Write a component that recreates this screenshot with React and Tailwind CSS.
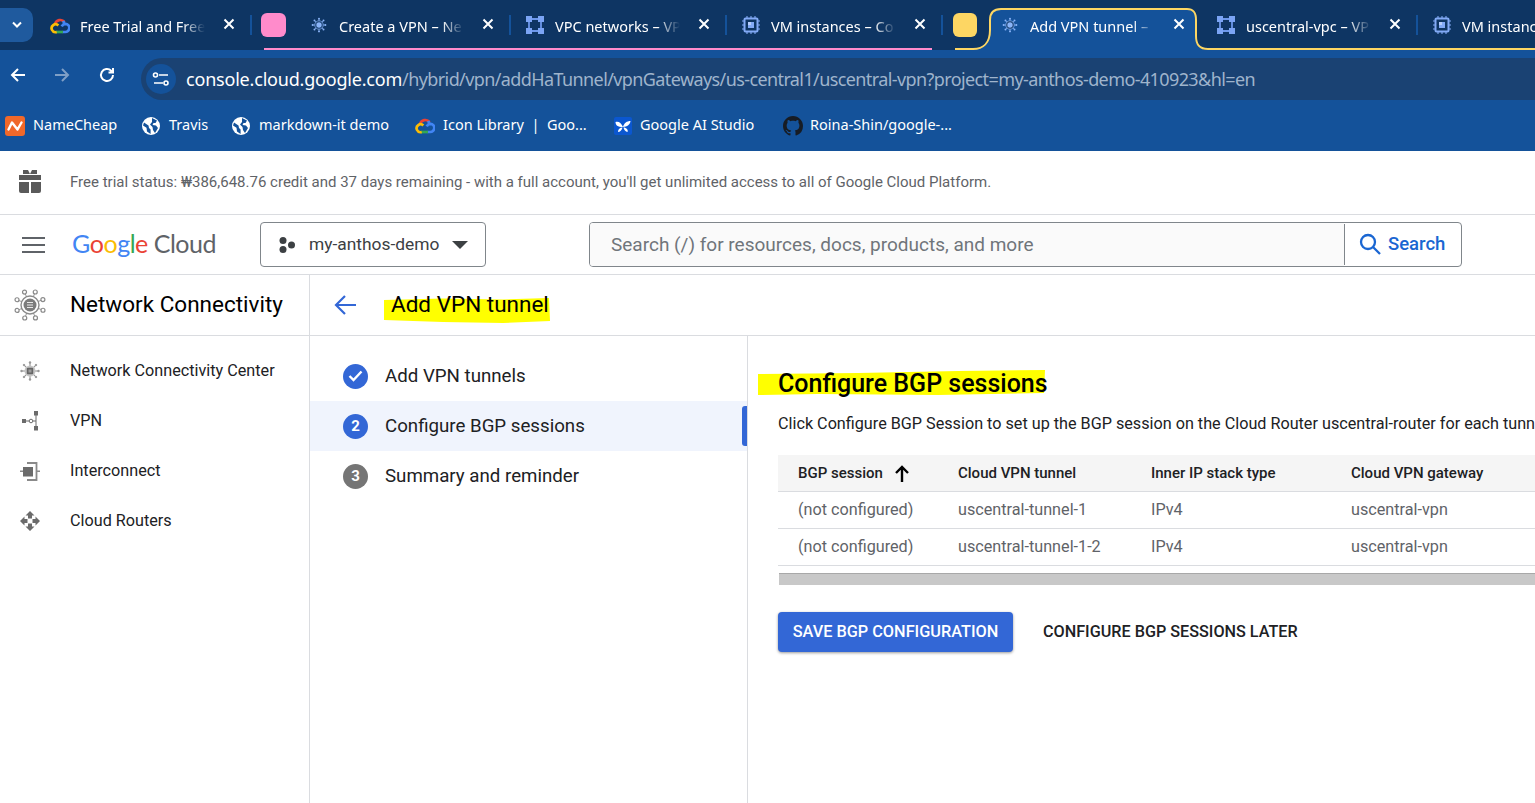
import React from "react";

const Hub = ({ size = 18, color = "#8ab4f8", spoke = 8.5, dot = 1.2, core = 3.6 }) => {
  const angles = [0, 45, 90, 135, 180, 225, 270, 315];
  return (
    <svg width={size} height={size} viewBox="0 0 24 24" className="shrink-0">
      {angles.map((a) => {
        const x = 12 + spoke * Math.cos((a * Math.PI) / 180);
        const y = 12 + spoke * Math.sin((a * Math.PI) / 180);
        return (
          <g key={a}>
            <line x1="12" y1="12" x2={x} y2={y} stroke={color} strokeWidth="1" />
            <circle cx={x} cy={y} r={dot} fill={color} />
          </g>
        );
      })}
      <circle cx="12" cy="12" r={core + 2} fill="#0e3563" stroke={color} strokeWidth="1" />
      <circle cx="12" cy="12" r={core} fill={color} />
    </svg>
  );
};

// big network connectivity mark in the section bar
const NetworkMark = () => {
  const angles = [0, 45, 90, 135, 180, 225, 270, 315];
  return (
    <svg width="34" height="34" viewBox="0 0 34 34" className="shrink-0">
      {angles.map((a) => {
        const x = 17 + 14 * Math.cos(((a + 22) * Math.PI) / 180);
        const y = 17 + 14 * Math.sin(((a + 22) * Math.PI) / 180);
        return (
          <g key={a}>
            <line x1="17" y1="17" x2={x} y2={y} stroke="#9a9a9a" strokeWidth="1" />
            <circle cx={x} cy={y} r="2" fill="#fff" stroke="#8a8a8a" strokeWidth="1.200" />
          </g>
        );
      })}
      <circle cx="17" cy="17" r="9" fill="#fff" stroke="#8a8a8a" strokeWidth="1.400" />
      <circle cx="17" cy="17" r="6.500" fill="#7c7c7c" />
      <path d="M14 14.500h6M14 17h6M14 19.500h6" stroke="#e8e8e8" strokeWidth="1.100" />
    </svg>
  );
};

const VpcIcon = () => (
  <svg width="18" height="18" viewBox="0 0 18 18" className="shrink-0">
    <path d="M3 3H15V15H3Z" fill="none" stroke="#6d97ea" strokeWidth="1.800" />
    <path d="M0 0h6v6H0zM12 0h6v6h-6zM0 12h6v6H0zM12 12h6v6h-6z" fill="#7ba4f4" />
  </svg>
);

const ChipIcon = () => (
  <svg width="18" height="18" viewBox="0 0 18 18" className="shrink-0">
    <path d="M5 0v18M9 0v18M13 0v18M0 5h18M0 9h18M0 13h18" stroke="#82aaf6" strokeWidth="1.100" />
    <rect x="2.500" y="2.500" width="13" height="13" rx="1" fill="#0e3563" stroke="#82aaf6" strokeWidth="2" />
    <rect x="6" y="6" width="6" height="6" fill="#82aaf6" />
    <path d="M6 6h3v3H6z" fill="#b5ccfa" />
  </svg>
);

const CloudLogo = ({ w = 20, h = 17 }) => (
  <svg width={w} height={h} viewBox="0 0 24 20" fill="none" strokeWidth="3.200" className="shrink-0">
    <path d="M6 8.500A6.500 6.500 0 0 1 17.500 6" stroke="#ea4335" />
    <path d="M15 6.500l3-1M14 11a5.500 5.500 0 0 1 4.500-3A4.700 4.700 0 0 1 18 17.800H15" stroke="#4285f4" />
    <path d="M15.500 17.800H7" stroke="#34a853" />
    <path d="M8 17.800A4.700 4.700 0 1 1 10 10" stroke="#fbbc05" />
  </svg>
);

const Globe = () => (
  <svg width="18" height="18" viewBox="0 0 18 18" className="shrink-0">
    <circle cx="9" cy="9" r="9" fill="#fff" />
    <path d="M2 5.500 6.500 8.500 7 11l1.600 1.400V17L5 14.500 4.500 10.800 1 8.500ZM10 1l5 2.500-1.500 2.500H11.500L10.500 8l3.500.5 2 2.500-3 5L11 13l-.5-3L8 7.500 10 5Z" fill="#14529a" />
  </svg>
);

const NameCheapIcon = () => (
  <span className="w-[20px] h-[20px] rounded-[3px] bg-[#f0682a] flex items-center justify-center shrink-0">
    <svg width="16" height="10" viewBox="0 0 16 10" fill="none">
      <path d="M1.500 8.500 5 1.500l5.500 7 4-7" stroke="#fff" strokeWidth="2.400" strokeLinecap="round" strokeLinejoin="round" />
    </svg>
  </span>
);

const AiStudioIcon = () => (
  <span className="w-[18px] h-[18px] rounded-[2px] bg-[#0b57d0] flex items-center justify-center shrink-0">
    <svg width="16" height="14" viewBox="0 0 16 14" fill="#fff">
      <path d="M8 8C6 3 3 2 .5 3c0 3 2 5 7.500 5ZM8 8c1-4 4-6 7.500-6C15.500 5 12 8 8 8ZM7.500 8.500C5 8.500 3 10 3 13c2 0 4-2 4.500-4.500ZM8.500 8.500c.5 2.500 2 4 4 4.500 1-2-1-4.500-4-4.500Z" />
    </svg>
  </span>
);

const GithubIcon = () => (
  <svg width="20" height="20" viewBox="0 0 16 16" fill="#171c24" className="shrink-0">
    <path d="M8 0C3.580 0 0 3.580 0 8c0 3.540 2.290 6.530 5.470 7.590.4.070.55-.170.55-.380 0-.190-.010-.820-.010-1.490-2.010.370-2.530-.490-2.690-.940-.090-.230-.480-.940-.820-1.130-.280-.150-.680-.520-.010-.530.630-.010 1.080.580 1.230.820.720 1.210 1.870.870 2.330.660.070-.520.280-.870.510-1.070-1.780-.200-3.640-.890-3.640-3.950 0-.870.310-1.590.820-2.150-.080-.200-.360-1.020.080-2.120 0 0 .670-.210 2.200.820.640-.180 1.320-.270 2-.270s1.360.090 2 .270c1.530-1.040 2.200-.820 2.200-.820.440 1.100.160 1.920.080 2.120.510.560.820 1.270.820 2.150 0 3.070-1.870 3.750-3.650 3.950.290.250.540.730.540 1.480 0 1.070-.010 1.930-.010 2.200 0 .210.150.460.550.380A8.010 8.010 0 0 0 16 8c0-4.420-3.580-8-8-8Z" />
  </svg>
);

const Tab = ({ icon, title, last }) => (
  <div className="w-[216px] h-[50px] shrink-0 flex items-center pl-[15px] pt-[4px]">
    <span className="w-[18px] flex justify-center shrink-0 -mt-[4px]">{icon}</span>
    <span className="ml-[11px] w-[125px] shrink-0 whitespace-nowrap text-[14.500px] text-white [mask-image:linear-gradient(to_right,black_82%,transparent)]">
      {title}
    </span>
    <svg width="12" height="12" viewBox="0 0 12 12" className="ml-[18px] -mt-[6px] shrink-0">
      <path d="M1.500 1.500l9 9M10.500 1.500l-9 9" stroke="#fff" strokeWidth="2" />
    </svg>
    {!last && <span className="ml-auto w-[2px] h-[20px] -mt-[4px] bg-[#14529a] shrink-0" />}
  </div>
);

const tabFont = "font-['Noto_Sans',sans-serif]";

const TabStrip = () => (
  <div className={`${tabFont} h-[50px] bg-[#0e3563] flex overflow-hidden relative`}>
    <div className="w-[36px] shrink-0 pt-[8px]">
      <div className="w-[33px] h-[34px] rounded-r-[10px] bg-[#1f5a9e] flex items-center justify-center">
        <svg width="12" height="8" viewBox="0 0 12 8" fill="none">
          <path d="M2 1.500 6 5.500 10 1.500" stroke="#fff" strokeWidth="2" />
        </svg>
      </div>
    </div>
    <Tab icon={<CloudLogo />} title="Free Trial and Free" />
    <div className="w-[43px] shrink-0 pl-[9px] pt-[13px]">
      <div className="w-[25px] h-[24px] rounded-[6px] bg-[#ff8bcb]" />
    </div>
    <div className="flex relative shrink-0">
      <Tab icon={<Hub size={18} dot={1.300} />} title="Create a VPN – Ne" />
      <Tab icon={<VpcIcon />} title="VPC networks – VP" />
      <Tab icon={<ChipIcon />} title="VM instances – Co" />
      <span className="absolute left-[-31px] right-[11px] bottom-0 h-[2px] bg-[#ff8bcb]" />
    </div>
    <div className="w-[43px] shrink-0 pl-[10px] pt-[13px] relative">
      <div className="w-[24px] h-[24px] rounded-[6px] bg-[#fdd663]" />
    </div>
    <div className="relative w-[216px] shrink-0">
      <svg width="256" height="50" viewBox="0 0 256 50" className="absolute -left-[31px] top-0" fill="#14529a" stroke="none">
        <path d="M0 50H256V50H252C242 49 242 43 242 36V20C242 13 239 9 232 9H46C39 9 35 13 35 20V30C35 43 28 49 18 49H0Z" />
        <path d="M0 49H18C28 49 35 43 35 30V20C35 13 39 9 46 9H232C239 9 241 13 241 20V36C241 43 243 49 253 49H256" fill="none" stroke="#fdd663" strokeWidth="2" />
      </svg>
      <div className="relative">
        <Tab icon={<Hub size={18} dot={1.300} />} title="Add VPN tunnel –" last />
      </div>
    </div>
    <div className="flex relative shrink-0">
      <Tab icon={<VpcIcon />} title="uscentral-vpc – VP" />
      <Tab icon={<ChipIcon />} title="VM instanc" />
      <span className="absolute left-[6px] right-0 bottom-0 h-[2px] bg-[#fdd663]" />
    </div>
  </div>
);

const Toolbar = () => (
  <div className={`${tabFont} h-[50px] bg-[#14529a] flex items-end`}>
    <div className="h-[50px] w-[141px] shrink-0 flex items-center">
      <svg width="18" height="18" viewBox="0 0 18 18" fill="none" className="ml-[9px]">
        <path d="M16 9H3M9 3 3 9l6 6" stroke="#fff" strokeWidth="2" />
      </svg>
      <svg width="18" height="18" viewBox="0 0 18 18" fill="none" className="ml-[26px]">
        <path d="M2 9h13M9 3l6 6-6 6" stroke="#7f9fc6" strokeWidth="2" />
      </svg>
      <svg width="18" height="18" viewBox="0 0 18 18" fill="none" className="ml-[27px]">
        <path d="M15 9a6 6 0 1 1-1.800-4.300L15 6.500M15 2v4.500h-4.500" stroke="#fff" strokeWidth="2" />
      </svg>
    </div>
    <div className="flex-1 h-[42px] bg-[#1a4273] rounded-l-[21px] flex items-center pl-[5px]">
      <div className="w-[30px] h-[30px] rounded-full bg-[#14529a] flex items-center justify-center shrink-0">
        <svg width="18" height="14" viewBox="0 0 18 14" fill="none" stroke="#fff" strokeWidth="1.600">
          <path d="M7 3h9M2 11h9" />
          <circle cx="3.500" cy="3" r="2" />
          <circle cx="14" cy="11" r="2" />
        </svg>
      </div>
      <span className="ml-[10px] text-[18px] whitespace-nowrap text-white tracking-[-0.2px]">
        console.cloud.google.com
        <span className="text-[#9fb4cc] tracking-[-0.6px]">/hybrid/vpn/addHaTunnel/vpnGateways/us-central1/uscentral-vpn?project=my-anthos-demo-410923&amp;hl=en</span>
      </span>
    </div>
  </div>
);

const bookmarks = [
  { icon: <NameCheapIcon />, label: "NameCheap", w: "w-[142px]", pad: "pl-[5px]", gap: "gap-[8px]" },
  { icon: <Globe />, label: "Travis", w: "w-[90px]", pad: "", gap: "gap-[9px]" },
  { icon: <Globe />, label: "markdown-it demo", w: "w-[183px]", pad: "", gap: "gap-[9px]" },
  { icon: <CloudLogo w={20} h={17} />, label: "Icon Library  |  Goo...", w: "w-[199px]", pad: "", gap: "gap-[8px]" },
  { icon: <AiStudioIcon />, label: "Google AI Studio", w: "w-[169px]", pad: "", gap: "gap-[8px]" },
  { icon: <GithubIcon />, label: "Roina-Shin/google-...", w: "w-[190px]", pad: "", gap: "gap-[7px]" },
];

const Bookmarks = () => (
  <div className={`${tabFont} h-[51px] bg-[#14529a] flex items-center text-[14.500px] text-white`}>
    {bookmarks.map((b) => (
      <div key={b.label} className={`${b.w} ${b.pad} ${b.gap} flex items-center shrink-0 whitespace-pre`}>
        {b.icon}
        <span className="pb-[2px]">{b.label}</span>
      </div>
    ))}
  </div>
);

const TrialBanner = () => (
  <div className="h-[64px] border-b border-[#dadce0] flex items-center pl-[19px]">
    <svg width="22" height="23" viewBox="0 0 22 23" fill="#5a5a5a" className="shrink-0 -mt-[2px]">
      <path d="M0 5h22v5H0zM0 12h10v11H2a2 2 0 0 1-2-2zM12 12h10v9a2 2 0 0 1-2 2h-8zM10 5h2v5h-2z" />
      <path d="M4 0h5l2 4H4zM18 0h-5l-2 4h7z" />
    </svg>
    <span className="ml-[29px] text-[15px] text-[#5f6368] whitespace-nowrap">
      Free trial status: ₩386,648.76 credit and 37 days remaining - with a full account, you'll get unlimited access to all of Google Cloud Platform.
    </span>
  </div>
);

const Header = () => (
  <div className="h-[60px] border-b border-[#dadce0] flex items-center pl-[22px]">
    <svg width="23" height="16" viewBox="0 0 23 16" fill="#5f6368" className="shrink-0">
      <path d="M0 0h23v2H0zM0 7h23v2H0zM0 14h23v2H0z" />
    </svg>
    <div className="ml-[27px] w-[188px] shrink-0 pb-[2px] flex items-baseline font-['Lato',sans-serif] text-[25px] tracking-[-0.500px]">
      <span className="text-[#4285f4]">G</span>
      <span className="text-[#ea4335]">o</span>
      <span className="text-[#fbbc05]">o</span>
      <span className="text-[#4285f4]">g</span>
      <span className="text-[#34a853]">l</span>
      <span className="text-[#ea4335]">e</span>
      <span className="ml-[6px] text-[#5f6368]">Cloud</span>
    </div>
    <div className="w-[226px] h-[45px] shrink-0 border border-[#80868b] rounded-[4px] flex items-center pl-[17px]">
      <svg width="18" height="16" viewBox="0 0 18 16" fill="#3c4043" className="shrink-0">
        <circle cx="5" cy="3.500" r="3.500" />
        <circle cx="5" cy="12.500" r="3.500" />
        <circle cx="13.500" cy="8" r="3.500" />
      </svg>
      <span className="ml-[13px] pb-[1px] text-[17.400px] text-[#3c4043] whitespace-nowrap">my-anthos-demo</span>
      <svg width="16" height="8" viewBox="0 0 16 8" fill="#3c4043" className="ml-[12px] shrink-0">
        <path d="M0 0h16L8 8z" />
      </svg>
    </div>
    <div className="ml-[103px] w-[873px] h-[45px] shrink-0 border border-[#80868b] rounded-[4px] flex overflow-hidden">
      <div className="flex-1 bg-[#fafafa] flex items-center pl-[21px] pt-[2px] text-[19px] text-[#70757a] whitespace-nowrap">
        Search (/) for resources, docs, products, and more
      </div>
      <div className="w-[117px] shrink-0 border-l border-[#80868b] flex items-center pl-[14px] my-[1px]">
        <svg width="22" height="22" viewBox="0 0 22 22" fill="none" stroke="#1a66d2" strokeWidth="2.300" className="shrink-0 -mt-[2px]">
          <circle cx="9" cy="9" r="7" />
          <path d="M14 14l7 7" />
        </svg>
        <span className="ml-[7px] text-[18.500px] font-medium text-[#1a66d2]">Search</span>
      </div>
    </div>
  </div>
);

const SectionBar = () => (
  <div className="h-[61px] border-b border-[#dadce0] flex">
    <div className="w-[310px] shrink-0 border-r border-[#dadce0] flex items-center pl-[13px]">
      <NetworkMark />
      <span className="ml-[23px] text-[22.500px] text-black whitespace-nowrap">Network Connectivity</span>
    </div>
    <div className="flex-1 flex items-center pl-[24px]">
      <svg width="22" height="20" viewBox="0 0 22 20" fill="none" stroke="#3367d6" strokeWidth="2.200" className="shrink-0">
        <path d="M22 10H2M11 1 2 10l9 9" />
      </svg>
      {/* marker stroke from the screenshot, sits behind the title */}
      <span className="ml-[35px] relative whitespace-nowrap text-[22.500px] text-black">
        <svg width="168" height="25" viewBox="0 0 168 25" className="absolute left-[-8px] top-[10px]">
          <path d="M1 2 60 .5 120 1.500 166 0 167 23 120 25 60 24 30 23 1 22Z" fill="#ffff00" />
        </svg>
        <span className="relative">Add VPN tunnel</span>
      </span>
    </div>
  </div>
);

const NavIcon1 = () => (
  <svg width="20" height="20" viewBox="0 0 20 20" className="shrink-0">
    {[0, 45, 90, 135, 180, 225, 270, 315].map((a) => (
      <g key={a} transform={`rotate(${a} 10 10)`}>
        <path d="M10 1.500v4" stroke="#8a8a8a" strokeWidth="1" />
        <circle cx="10" cy="1.500" r="1.200" fill="#9a9a9a" />
      </g>
    ))}
    <circle cx="10" cy="10" r="5.500" fill="#c4c4c4" />
    <rect x="6.800" y="6.800" width="6.400" height="6.400" rx="1" fill="#666" />
    <rect x="8.500" y="8.500" width="3" height="3" fill="#9a9a9a" />
  </svg>
);
const NavIcon2 = () => (
  <svg width="20" height="20" viewBox="0 0 20 20" fill="#6b6b6b">
    <path d="M2 8h4v4H2zM14 0h4v4.500h-4zM14 15h4v4.500h-4zM15.500 4h1v12h-1zM6 9.500h3v1H6zM13 9.500h3v1h-3z" />
    <circle cx="11" cy="10" r="1.800" fill="none" stroke="#6b6b6b" strokeWidth="1" />
  </svg>
);
const NavIcon3 = () => (
  <svg width="20" height="20" viewBox="0 0 20 20" fill="#6b6b6b">
    <path d="M0 9.500h3v1.500H0zM17 9.500h3v1.500h-3z" fill="#8a8a8a" />
    <path d="M3 6h10v9.500H3z" />
    <path d="M7 2h9.500v17H7" fill="none" stroke="#8a8a8a" strokeWidth="1.800" />
  </svg>
);
const NavIcon4 = () => (
  <svg width="20" height="20" viewBox="0 0 20 20" fill="#6b6b6b">
    {[0, 90, 180, 270].map((a) => (
      <path key={a} transform={`rotate(${a} 10 10)`} d="M10 0 14.500 4.500H12V7.500H8V4.500H5.500Z" />
    ))}
  </svg>
);

const navItems = [
  { icon: <NavIcon1 />, label: "Network Connectivity Center" },
  { icon: <NavIcon2 />, label: "VPN" },
  { icon: <NavIcon3 />, label: "Interconnect" },
  { icon: <NavIcon4 />, label: "Cloud Routers" },
];

const Sidebar = () => (
  <div className="w-[310px] shrink-0 border-r border-[#dadce0] pt-[10px]">
    {navItems.map((item) => (
      <div key={item.label} className="h-[50px] flex items-center pl-[20px]">
        <span className="w-[20px] flex justify-center shrink-0">{item.icon}</span>
        <span className="ml-[30px] text-[16.200px] text-[#202124] whitespace-nowrap">{item.label}</span>
      </div>
    ))}
  </div>
);

const Stepper = () => (
  <div className="w-[438px] shrink-0 border-r border-[#dadce0] pt-[15px] text-[18.700px] text-[#202124]">
    <div className="h-[50px] flex items-center pl-[33px]">
      <span className="w-[25px] h-[25px] rounded-full bg-[#3367d6] flex items-center justify-center shrink-0">
        <svg width="15" height="12" viewBox="0 0 15 12" fill="none" stroke="#fff" strokeWidth="2.400">
          <path d="M1.500 6l4 4 8-8.500" />
        </svg>
      </span>
      <span className="ml-[17px]">Add VPN tunnels</span>
    </div>
    <div className="h-[50px] flex items-center pl-[33px] bg-[#f0f4fd] relative">
      <span className="w-[25px] h-[25px] rounded-full bg-[#3367d6] flex items-center justify-center shrink-0 text-[15px] font-bold text-white">2</span>
      <span className="ml-[17px]">Configure BGP sessions</span>
      <span className="absolute right-0 top-[5px] w-[5px] h-[40px] rounded-l-[3px] bg-[#3367d6]" />
    </div>
    <div className="h-[50px] flex items-center pl-[33px]">
      <span className="w-[25px] h-[25px] rounded-full bg-[#757575] flex items-center justify-center shrink-0 text-[15px] font-bold text-white">3</span>
      <span className="ml-[17px]">Summary and reminder</span>
    </div>
  </div>
);

const rows = [
  ["(not configured)", "uscentral-tunnel-1", "IPv4", "uscentral-vpn"],
  ["(not configured)", "uscentral-tunnel-1-2", "IPv4", "uscentral-vpn"],
];

const Content = () => (
  <div className="flex-1 min-w-0 overflow-hidden pl-[30px] pt-[33px]">
    <div className="w-[900px]">
      <span className="relative inline-block whitespace-nowrap text-[25px] font-medium leading-[30px] text-black">
        <svg width="287" height="26" viewBox="0 0 287 26" className="absolute left-[-20px] top-[1px]">
          <path d="M0 4 100 3 200 1 287 0 286 23 180 25 60 24 0 25Z" fill="#ffff00" />
        </svg>
        <span className="relative">Configure BGP sessions</span>
      </span>
      <p className="mt-[13px] text-[16.200px] leading-[24px] text-[#202124] whitespace-nowrap">
        Click Configure BGP Session to set up the BGP session on the Cloud Router uscentral-router for each tunnel.
      </p>
      <div className="mt-[19px]">
        <div className="h-[37px] bg-[#f5f5f5] border-b border-[#dadce0] grid grid-cols-[180px_193px_200px_1fr] items-center text-[15px] font-medium text-[#202124]">
          <span className="pl-[20px] flex items-center whitespace-nowrap">
            BGP session
            <svg width="14" height="17" viewBox="0 0 14 17" fill="none" stroke="#000" strokeWidth="2.400" className="ml-[12px]">
              <path d="M7 17V2M1 8l6-6 6 6" />
            </svg>
          </span>
          <span>Cloud VPN tunnel</span>
          <span>Inner IP stack type</span>
          <span>Cloud VPN gateway</span>
        </div>
        {rows.map((r) => (
          <div key={r[1]} className="h-[37px] border-b border-[#dadce0] grid grid-cols-[180px_193px_200px_1fr] items-center text-[16.200px] text-[#5f6368]">
            <span className="pl-[20px]">{r[0]}</span>
            <span>{r[1]}</span>
            <span>{r[2]}</span>
            <span>{r[3]}</span>
          </div>
        ))}
        <div className="mt-[7px] ml-[1px] h-[12px] bg-[#c8c8c8] border-t border-[#a8a8a8]" />
      </div>
      <div className="mt-[27px] flex items-center">
        <button className="h-[40px] w-[235px] rounded-[4px] bg-[#3367d6] text-[16.300px] font-medium text-white shadow-[0_1px_3px_rgba(0,0,0,0.4)] whitespace-nowrap">
          SAVE BGP CONFIGURATION
        </button>
        <button className="ml-[30px] text-[16.200px] font-medium text-[#202124] whitespace-nowrap">
          CONFIGURE BGP SESSIONS LATER
        </button>
      </div>
    </div>
  </div>
);

const App = () => {
  return (
    <div className="h-[803px] w-[1535px] overflow-hidden bg-white font-['Roboto',sans-serif] flex flex-col">
      <TabStrip />
      <Toolbar />
      <Bookmarks />
      <TrialBanner />
      <Header />
      <SectionBar />
      <div className="flex flex-1 min-h-0">
        <Sidebar />
        <Stepper />
        <Content />
      </div>
    </div>
  );
};

export default App;
